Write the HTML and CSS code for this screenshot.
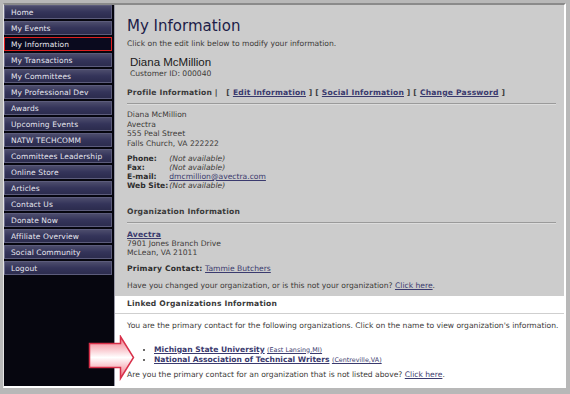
FILE: index.html
```html
<!DOCTYPE html>
<html>
<head>
<meta charset="utf-8">
<link rel="stylesheet" href="styles.css">
</head>
<body>
<div class="frame">
  <nav class="sidebar">
    <a class="nav-item">Home</a>
    <a class="nav-item">My Events</a>
    <a class="nav-item active">My Information</a>
    <a class="nav-item">My Transactions</a>
    <a class="nav-item">My Committees</a>
    <a class="nav-item">My Professional Dev</a>
    <a class="nav-item">Awards</a>
    <a class="nav-item">Upcoming Events</a>
    <a class="nav-item">NATW TECHCOMM</a>
    <a class="nav-item">Committees Leadership</a>
    <a class="nav-item">Online Store</a>
    <a class="nav-item">Articles</a>
    <a class="nav-item">Contact Us</a>
    <a class="nav-item">Donate Now</a>
    <a class="nav-item">Affiliate Overview</a>
    <a class="nav-item">Social Community</a>
    <a class="nav-item">Logout</a>
  </nav>
  <main class="content">
    <div class="upper">
      <h1 class="title">My Information</h1>
      <p class="intro">Click on the edit link below to modify your information.</p>
      <div class="person">Diana McMillion</div>
      <div class="cid">Customer ID: 000040</div>
      <div class="head profile-head">Profile Information | &nbsp; [ <a class="link">Edit Information</a> ] [ <a class="link">Social Information</a> ] [ <a class="link">Change Password</a> ]</div>
      <div class="rule"></div>
      <div class="address">
        <div>Diana McMillion</div>
        <div>Avectra</div>
        <div>555 Peal Street</div>
        <div>Falls Church, VA 222222</div>
      </div>
      <div class="contact">
        <span class="lbl">Phone:</span><span class="na">(Not available)</span>
        <span class="lbl">Fax:</span><span class="na">(Not available)</span>
        <span class="lbl">E-mail:</span><span><a class="link">dmcmillion@avectra.com</a></span>
        <span class="lbl">Web Site:</span><span class="na">(Not available)</span>
      </div>
      <div class="head org-head">Organization Information</div>
      <div class="rule"></div>
      <div class="org">
        <div><a class="link bold">Avectra</a></div>
        <div>7901 Jones Branch Drive</div>
        <div>McLean, VA 21011</div>
      </div>
      <div class="primary"><b class="lbl">Primary Contact:</b> <a class="link">Tammie Butchers</a></div>
      <div class="changed">Have you changed your organization, or is this not your organization? <a class="link">Click here</a>.</div>
    </div>
    <section class="linked">
      <div class="head linked-head">Linked Organizations Information</div>
      <div class="rule light"></div>
      <p class="linked-intro">You are the primary contact for the following organizations. Click on the name to view organization's information.</p>
      <ul class="orgs">
        <li><a class="link org-name">Michigan State University</a> <a class="link loc">(East Lansing,MI)</a></li>
        <li><a class="link org-name">National Association of Technical Writers</a> <a class="link loc">(Centreville,VA)</a></li>
      </ul>
      <p class="linked-foot">Are you the primary contact for an organization that is not listed above? <a class="link">Click here</a>.</p>
    </section>
  </main>
  <svg class="arrow" width="48" height="46" viewBox="0 0 48 46">
    <defs>
      <linearGradient id="gv" x1="0" y1="0" x2="0" y2="1">
        <stop offset="0" stop-color="#f07080"/>
        <stop offset="0.5" stop-color="#ffffff"/>
        <stop offset="1" stop-color="#f07080"/>
      </linearGradient>
    </defs>
    <path d="M1.5 8.5 H32.5 V1.5 L45.5 22.5 L32.5 43.5 V32.5 H1.5 Z" fill="url(#gv)" stroke="#d8304a" stroke-width="1.5" stroke-linejoin="miter"/>
  </svg>
</div>
</body>
</html>
```

FILE: styles.css
```css
html, body {
  margin: 0;
  padding: 0;
}
body {
  width: 570px;
  height: 394px;
  background: #b8b8b8;
  font-family: "DejaVu Sans", Verdana, sans-serif;
  overflow: hidden;
}
.frame {
  position: relative;
  margin: 3px 0 0 3px;
  width: 560px;
  height: 381px;
  display: flex;
  border-top: 2px solid #8a8a8a;
  border-left: 1px solid #e4e4e4;
  border-right: 2px solid #ffffff;
  border-bottom: 2px solid #ffffff;
  background: #cccccc;
}
.sidebar {
  flex: none;
  width: 111px;
  background: #06060f;
  display: flex;
  flex-direction: column;
  gap: 2px;
  padding: 0 2px 0 0;
  border-right: 1px solid #9a9aa8;
  box-sizing: border-box;
}
.nav-item {
  display: block;
  height: 14px;
  line-height: 13px;
  box-sizing: border-box;
  padding-left: 6px;
  font-size: 7.5px;
  color: #e6e6ee;
  background: linear-gradient(#4c4c6c, #34345a 50%, #2c2c4e);
  border: 1px solid #5c5c7c;
  border-left-color: #6a6a8a;
  white-space: nowrap;
  letter-spacing: 0.1px;
}
.nav-item.active {
  background: #0a0a1e;
  border: 1px solid #e02020;
}
.content {
  flex: 1;
  display: flex;
  flex-direction: column;
  color: #3c3a38;
  font-size: 7.6px;
}
.upper {
  flex: 1;
  padding: 12px 8px 0 12px;
}
.title {
  margin: 0;
  font-family: "DejaVu Sans", sans-serif;
  font-weight: normal;
  font-size: 15px;
  line-height: 18px;
  color: #1c1c48;
}
.intro {
  margin: 4px 0 0;
  line-height: 10px;
}
.person {
  margin-top: 7px;
  padding-left: 3px;
  font-family: "Liberation Sans", Arial, sans-serif;
  font-size: 11.5px;
  line-height: 12px;
  color: #1a1a1a;
}
.cid {
  padding-left: 3px;
  margin-top: 1px;
  line-height: 9px;
}
.head {
  font-weight: bold;
  line-height: 10px;
  color: #3a3a3a;
  letter-spacing: 0.2px;
}
.profile-head {
  margin-top: 10px;
}
.link {
  color: #3a3a6e;
  text-decoration: underline;
}
.bold, .lbl {
  font-weight: bold;
  letter-spacing: 0.2px;
}
.rule {
  height: 1px;
  margin-top: 5px;
  background: #9a9a9a;
  border-bottom: 1px solid #dcdcdc;
}
.address {
  margin-top: 5px;
  line-height: 9.7px;
}
.contact {
  margin-top: 5px;
  display: grid;
  grid-template-columns: max-content auto;
  column-gap: 1px;
  line-height: 9px;
  justify-content: start;
}
.lbl {
  color: #2e2e2e;
  white-space: nowrap;
}
.contact .lbl {
  letter-spacing: 0;
}
.na {
  font-style: italic;
}
.org-head {
  margin-top: 17px;
}
.org {
  margin-top: 6.5px;
  line-height: 9px;
}
.primary {
  margin-top: 6.5px;
  line-height: 10px;
}
.changed {
  margin-top: 7px;
  line-height: 10px;
}
.linked {
  flex: none;
  height: 90px;
  background: #ffffff;
  padding: 3px 0 0 0;
  box-sizing: border-box;
}
.linked-head {
  padding-left: 12px;
}
.rule.light {
  margin-top: 4px;
  background: #cfcfcf;
  border-bottom: none;
}
.linked-intro {
  margin: 7px 0 0 12px;
  line-height: 10px;
}
.orgs {
  margin: 13.5px 0 0;
  padding-left: 39px;
  line-height: 9px;
}
.orgs li {
  list-style: disc;
}
.org-name {
  font-weight: bold;
}
.loc {
  font-size: 6.4px;
}
.linked-foot {
  margin: 5.5px 0 0 12px;
  line-height: 10px;
}
.arrow {
  position: absolute;
  left: 84px;
  top: 330px;
}
```
